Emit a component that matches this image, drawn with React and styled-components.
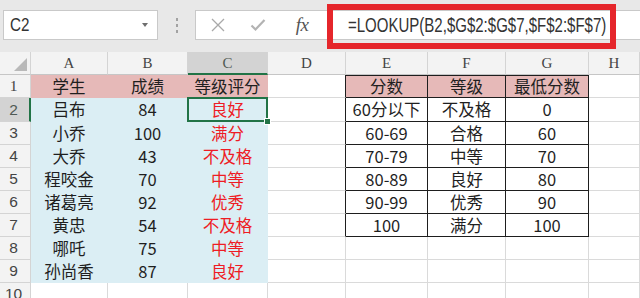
import React from "react";
import styled, { createGlobalStyle, css } from "styled-components";

const GlobalStyle = createGlobalStyle`
  html, body { margin: 0; padding: 0; background: #ffffff; }
  body { overflow: hidden; }
`;

const Page = styled.div`
  width: 640px;
  height: 298px;
  overflow: hidden;
  display: flex;
  flex-direction: column;
  background: #ffffff;
`;

const TopBar = styled.div`
  height: 52px;
  flex: 0 0 52px;
  background: #e8e8e8;
  display: flex;
  align-items: flex-start;
  padding: 10px 0 0 3px;
  box-sizing: border-box;
`;

const NameBox = styled.div`
  flex: 0 0 155px;
  width: 155px;
  height: 30px;
  box-sizing: border-box;
  background: #ffffff;
  border: 1px solid #c9c9c9;
  display: flex;
  align-items: center;
  justify-content: space-between;
  padding: 0 9px 0 6px;
  overflow: hidden;
`;

const UiText = styled.span`
  display: inline-block;
  font-family: "Liberation Sans", Arial, sans-serif;
  color: #333333;
  white-space: nowrap;
  transform-origin: left center;
  font-size: ${(p) => p.$size}px;
  transform: scaleX(${(p) => p.$sx});
`;

const DropArrow = styled.span`
  flex: 0 0 auto;
  width: 0;
  height: 0;
  border-left: 3px solid transparent;
  border-right: 3px solid transparent;
  border-top: 4px solid #6e6e6e;
`;

const Grip = styled.div`
  flex: 0 0 37px;
  height: 30px;
  display: flex;
  flex-direction: column;
  align-items: center;
  justify-content: center;
  gap: 3px;
`;

const GripDot = styled.span`
  width: 2px;
  height: 3px;
  background: #a2a2a2;
`;

const FormulaBar = styled.div`
  position: relative;
  flex: 1 1 auto;
  min-width: 0;
  height: 30px;
  box-sizing: border-box;
  background: #ffffff;
  border: 1px solid #c9c9c9;
  border-right: none;
  display: flex;
  align-items: center;
`;

const IconSlot = styled.span`
  flex: 0 0 ${(p) => p.$w}px;
  display: flex;
  align-items: center;
  justify-content: center;
`;

const Fx = styled.span`
  font-family: "Liberation Serif", "Times New Roman", serif;
  font-style: italic;
  font-size: 19px;
  color: #555555;
  letter-spacing: -0.5px;
`;

const FormulaTextWrap = styled.div`
  flex: 1 1 auto;
  min-width: 0;
  padding-left: ${(p) => p.$indent}px;
  display: flex;
  align-items: center;
`;

const Annotation = styled.div`
  position: absolute;
  left: 131px;
  top: -7px;
  width: 289px;
  height: 45px;
  box-sizing: border-box;
  border: 6px solid #e5262b;
  pointer-events: none;
`;

const Sheet = styled.div`
  display: grid;
  grid-template-columns: 31px 77px 80px 80px 78px 82px 78px 83px 1fr;
  grid-template-rows: 23px 23px 24px repeat(8, 23px);
`;

const HeaderBase = css`
  box-sizing: border-box;
  display: flex;
  align-items: center;
  justify-content: center;
  background: #f3f3f3;
  color: #444444;
  border-right: 1px solid #d4d4d4;
  border-bottom: 1px solid #d4d4d4;
`;

const Corner = styled.div`
  ${HeaderBase};
  position: relative;
  border-bottom-color: #c6c6c6;
  &::after {
    content: "";
    position: absolute;
    right: 3px;
    bottom: 3px;
    width: 0;
    height: 0;
    border-left: 13px solid transparent;
    border-bottom: 13px solid #b9b9b9;
  }
`;

const ColHeader = styled.div`
  ${HeaderBase};
  font-family: "Liberation Serif", "Times New Roman", serif;
  font-size: 15px;
  border-bottom-color: #c6c6c6;
  ${(p) =>
    p.$active &&
    css`
      background: #d3d3d3;
      color: #505a54;
      border-bottom: 2px solid #217346;
      padding-top: 1px;
    `}
`;

const RowHeader = styled.div`
  ${HeaderBase};
  font-family: "Liberation Sans", Arial, sans-serif;
  font-size: 15.5px;
  padding-right: 3px;
  ${(p) =>
    p.$serif &&
    css`
      font-family: "Liberation Serif", "Times New Roman", serif;
    `}
  ${(p) =>
    p.$active &&
    css`
      background: #d3d3d3;
      color: #505a54;
      border-right: 2px solid #217346;
      padding-right: 2px;
    `}
`;

const fills = {
  pink: "#e6b9b8",
  blue: "#dbeef4",
};

const Cell = styled.div`
  position: relative;
  box-sizing: border-box;
  display: flex;
  align-items: center;
  justify-content: center;
  font-family: "Noto Sans CJK SC", "Liberation Sans", sans-serif;
  font-size: 16.5px;
  line-height: 1;
  color: ${(p) => (p.$red ? "#ee1c24" : "#1f1f1f")};
  white-space: nowrap;
  background: ${(p) => (p.$fill ? fills[p.$fill] : "#ffffff")};
  border-right: 1px solid ${(p) => (p.$fill ? fills[p.$fill] : "#dadada")};
  border-bottom: 1px solid ${(p) => (p.$fill ? fills[p.$fill] : "#dadada")};
  ${(p) =>
    p.$edge &&
    css`
      border-right-color: #1e1e1e;
    `}
  ${(p) =>
    p.$box &&
    css`
      border-right-color: #1e1e1e;
      border-bottom-color: #1e1e1e;
    `}
  ${(p) =>
    p.$boxTop &&
    css`
      border-top: 1px solid #1e1e1e;
    `}
  ${(p) =>
    p.$selected &&
    css`
      &::after {
        content: "";
        position: absolute;
        left: -1px;
        top: -1px;
        right: -1px;
        bottom: -1px;
        border: 2px solid #217346;
      }
      &::before {
        content: "";
        position: absolute;
        right: -4px;
        bottom: -4px;
        width: 5px;
        height: 5px;
        background: #217346;
        border: 1px solid #ffffff;
        z-index: 1;
      }
    `}
`;

const columns = ["A", "B", "C", "D", "E", "F", "G", "H"];

const students = [
  ["学生", "成绩", "等级评分"],
  ["吕布", "84", "良好"],
  ["小乔", "100", "满分"],
  ["大乔", "43", "不及格"],
  ["程咬金", "70", "中等"],
  ["诸葛亮", "92", "优秀"],
  ["黄忠", "54", "不及格"],
  ["哪吒", "75", "中等"],
  ["孙尚香", "87", "良好"],
];

const grades = [
  ["分数", "等级", "最低分数"],
  ["60分以下", "不及格", "0"],
  ["60-69", "合格", "60"],
  ["70-79", "中等", "70"],
  ["80-89", "良好", "80"],
  ["90-99", "优秀", "90"],
  ["100", "满分", "100"],
];

const XIcon = () => (
  <svg width="16" height="16" viewBox="0 0 16 16">
    <path d="M2 2 L14 14 M14 2 L2 14" stroke="#a9a9a9" strokeWidth="1.3" fill="none" />
  </svg>
);

const CheckIcon = () => (
  <svg width="16" height="14" viewBox="0 0 16 14">
    <path d="M1.5 7.5 L5.5 11.5 L14.5 2" stroke="#b3b3b3" strokeWidth="2.2" fill="none" />
  </svg>
);

function Row({ index }) {
  const r = index - 1;
  const s = students[r];
  const g = grades[r];
  const cells = [];
  for (let c = 0; c < 8; c++) {
    let text = "";
    const props = {};
    if (c < 3 && s) {
      text = s[c];
      props.$fill = r === 0 ? "pink" : "blue";
      if (c === 2 && r > 0) props.$red = true;
      if (c === 2 && r === 1) props.$selected = true;
    }
    if (c === 3 && g) props.$edge = true;
    if (c >= 4 && c <= 6 && g) {
      text = g[c - 4];
      props.$box = true;
      if (r === 0) {
        props.$fill = "pink";
        props.$boxTop = true;
      }
    }
    cells.push(
      <Cell key={c} {...props}>
        {text}
      </Cell>
    );
  }
  return (
    <>
      <RowHeader $active={index === 2} $serif={index === 1}>
        {index}
      </RowHeader>
      {cells}
    </>
  );
}

export default function App() {
  return (
    <Page>
      <GlobalStyle />
      <TopBar>
        <NameBox>
          <UiText $size={19} $sx={0.8}>C2</UiText>
          <DropArrow />
        </NameBox>
        <Grip>
          <GripDot />
          <GripDot />
          <GripDot />
        </Grip>
        <FormulaBar>
          <IconSlot $w={44}>
            <XIcon />
          </IconSlot>
          <IconSlot $w={36}>
            <CheckIcon />
          </IconSlot>
          <IconSlot $w={52}>
            <Fx>fx</Fx>
          </IconSlot>
          <FormulaTextWrap $indent={20}>
            <UiText $size={21} $sx={0.715}>
              =LOOKUP(B2,$G$2:$G$7,$F$2:$F$7)
            </UiText>
          </FormulaTextWrap>
          <Annotation />
        </FormulaBar>
      </TopBar>
      <Sheet>
        <Corner />
        {columns.map((col) => (
          <ColHeader key={col} $active={col === "C"}>
            {col}
          </ColHeader>
        ))}
        {Array.from({ length: 10 }, (_, i) => (
          <Row key={i} index={i + 1} />
        ))}
      </Sheet>
    </Page>
  );
}
